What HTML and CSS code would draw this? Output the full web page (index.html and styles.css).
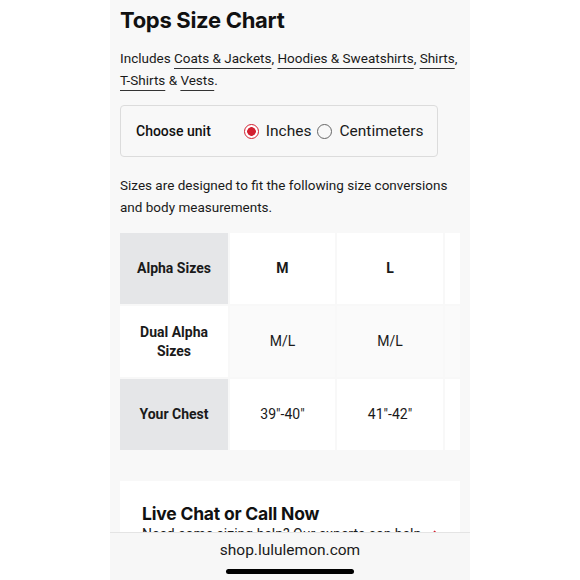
FILE: index.html
```html
<!DOCTYPE html>
<html>
<head>
<meta charset="utf-8">
<link rel="stylesheet" href="styles.css">
</head>
<body>
<div class="screen">
  <main class="content">
    <h1 class="title">Tops Size Chart</h1>
    <p class="intro">Includes <a>Coats &amp; Jackets</a>, <a>Hoodies &amp; Sweatshirts</a>, <a>Shirts</a>, <a>T-Shirts</a> &amp; <a>Vests</a>.</p>
    <div class="unit-box">
      <span class="unit-label">Choose unit</span>
      <span class="radio checked"></span><span class="opt">Inches</span>
      <span class="radio"></span><span class="opt">Centimeters</span>
    </div>
    <p class="note">Sizes are designed to fit the following size conversions and body measurements.</p>
    <div class="table-wrap">
      <div class="table">
        <div class="cell head gray">Alpha Sizes</div>
        <div class="cell bold white">M</div>
        <div class="cell bold white">L</div>
        <div class="cell white"></div>

        <div class="cell head white">Dual Alpha<br>Sizes</div>
        <div class="cell light">M/L</div>
        <div class="cell light">M/L</div>
        <div class="cell light"></div>

        <div class="cell head gray">Your Chest</div>
        <div class="cell white">39"-40"</div>
        <div class="cell white">41"-42"</div>
        <div class="cell white"></div>
      </div>
    </div>
    <section class="card">
      <h2 class="card-title">Live Chat or Call Now</h2>
      <div class="card-row">
        <span class="card-text">Need some sizing help? Our experts can help.</span>
        <svg class="arrow" width="14" height="10" viewBox="0 0 14 10"><path d="M0 6H12M8 2L12 6L8 10" fill="none" stroke="#d22030" stroke-width="1.6"/></svg>
      </div>
    </section>
  </main>
  <div class="browser-bar">
    <div class="url">shop.lululemon.com</div>
    <div class="home"></div>
  </div>
</div>
</body>
</html>
```
FILE: styles.css
```css
html, body {
  margin: 0;
  padding: 0;
  background: #ffffff;
}
body {
  font-family: "Roboto", "Liberation Sans", sans-serif;
  color: #111;
}
.screen {
  position: relative;
  width: 360px;
  height: 580px;
  margin: 0 auto;
  background: #f8f8f8;
  overflow: hidden;
}
.content {
  padding: 6px 10px 0 10px;
  height: 532px;
  box-sizing: border-box;
  overflow: hidden;
}
.title {
  margin: 0;
  font-family: "Inter", sans-serif;
  font-size: 22px;
  line-height: 28px;
  font-weight: 700;
  letter-spacing: -0.3px;
}
.intro {
  margin: 13px 0 0;
  font-size: 13.5px;
  line-height: 22px;
  color: #1a1a1a;
}
.intro a {
  text-decoration: underline;
  text-decoration-color: #333;
  text-underline-offset: 5px;
  text-decoration-thickness: 1px;
}
.unit-box {
  margin-top: 14px;
  width: 318px;
  height: 52px;
  box-sizing: border-box;
  border: 1px solid #dcdcdc;
  border-radius: 4px;
  display: flex;
  align-items: center;
  padding-left: 15px;
}
.unit-label {
  font-size: 14px;
  font-weight: 500;
  margin-right: 33px;
}
.radio {
  width: 15px;
  height: 15px;
  border: 1px solid #666;
  border-radius: 50%;
  box-sizing: border-box;
  margin-right: 7px;
}
.radio.checked {
  border: 1.5px solid #d22030;
  background: radial-gradient(circle, #d22030 0 4px, #fff 4.6px);
}
.opt {
  font-size: 15.5px;
  margin-right: 6px;
  color: #1a1a1a;
}
.note {
  margin: 17px 0 0;
  font-size: 13.5px;
  line-height: 22px;
  color: #1a1a1a;
}
.table-wrap {
  margin-top: 15px;
  width: 340px;
  overflow: hidden;
}
.table {
  display: grid;
  grid-template-columns: 108px 105px 106px 106px;
  grid-auto-rows: 71px;
  gap: 2px;
  width: max-content;
}
.cell {
  display: flex;
  align-items: center;
  justify-content: center;
  text-align: center;
  font-size: 14px;
  line-height: 19px;
  color: #1a1a1a;
}
.head, .bold {
  font-weight: 700;
}
.gray { background: #e5e6e8; }
.white { background: #ffffff; }
.light { background: #fafafa; }
.card {
  margin-top: 31px;
  background: #ffffff;
  height: 120px;
  padding: 22px 20px 0 22px;
  box-sizing: border-box;
}
.card-title {
  margin: 0;
  font-family: "Inter", sans-serif;
  font-size: 17.5px;
  line-height: 22px;
  font-weight: 700;
  letter-spacing: -0.2px;
}
.card-row {
  display: flex;
  align-items: center;
  justify-content: space-between;
  margin-top: 1px;
}
.card-text {
  font-size: 14px;
  color: #1a1a1a;
}
.browser-bar {
  position: absolute;
  left: 0;
  right: 0;
  top: 532px;
  bottom: 0;
  background: #f7f7f7;
  border-top: 1px solid #e4e4e4;
  display: flex;
  flex-direction: column;
  align-items: center;
}
.url {
  margin-top: 8px;
  font-size: 15.5px;
  line-height: 18px;
  color: #1a1a1a;
}
.home {
  margin-top: 10px;
  width: 128px;
  height: 5px;
  border-radius: 3px;
  background: #000;
}
```
